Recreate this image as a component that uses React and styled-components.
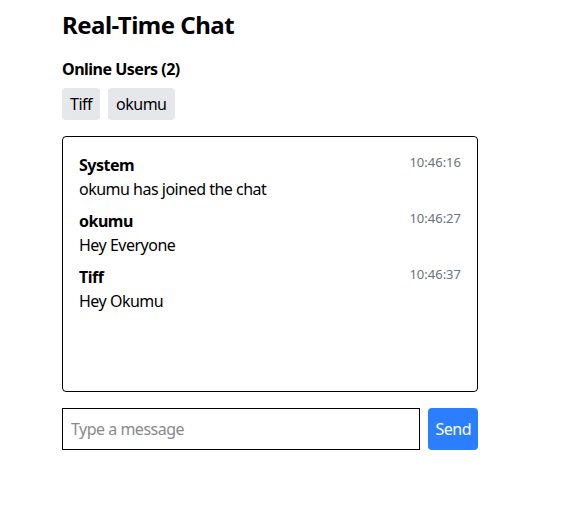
import React, { useState } from 'react';
import styled, { createGlobalStyle } from 'styled-components';

const GlobalStyle = createGlobalStyle`
    body {
        margin: 0;
        background: #ffffff;
        font-family: 'Segoe UI', 'Noto Sans', sans-serif;
        letter-spacing: -0.5px;
        color: #000000;
    }
`

const Page = styled.div`
    width: 416px;
    padding: 9px 0 0 62px;
`

const Title = styled.h1`
    margin: 0;
    font-size: 24px;
    line-height: 32px;
    font-weight: 700;
`

const UsersTitle = styled.h3`
    margin: 16px 0 0;
    font-size: 16px;
    line-height: 24px;
    font-weight: 700;
`

const UserList = styled.div`
    display: flex;
    gap: 8px;
    margin-top: 7px;
`

const UserChip = styled.span`
    background-color: #e5e7eb;
    border-radius: 4px;
    padding: 4px 8px;
    font-size: 16px;
    line-height: 24px;
`

const ChatBox = styled.div`
    box-sizing: border-box;
    height: 256px;
    margin-top: 16px;
    padding: 16px;
    border: 1px solid #000000;
    border-radius: 4px;
    overflow-y: auto;
`

const Message = styled.div`
    margin-bottom: 8px;
`

const MessageHeader = styled.div`
    display: flex;
    justify-content: space-between;
    align-items: flex-start;
`

const Sender = styled.strong`
    font-size: 16px;
    line-height: 24px;
`

const Time = styled.span`
    font-size: 13px;
    line-height: 19px;
    letter-spacing: 0;
    color: #6b7280;
`

const MessageText = styled.div`
    font-size: 16px;
    line-height: 24px;
`

const InputRow = styled.form`
    display: flex;
    gap: 8px;
    margin-top: 16px;
`

const MessageInput = styled.input`
    flex: 1;
    box-sizing: border-box;
    height: 42px;
    padding: 8px;
    border: 1px solid #000000;
    border-radius: 0;
    font-family: inherit;
    font-size: 16px;
    letter-spacing: -0.5px;
    outline: none;

    &::placeholder {
        color: #8a8a8a;
    }
`

const SendButton = styled.button`
    box-sizing: border-box;
    height: 42px;
    padding: 0 7px;
    background-color: #2b7fff;
    color: #ffffff;
    border: none;
    border-radius: 4px;
    font-family: inherit;
    font-size: 16px;
    letter-spacing: -0.5px;
    cursor: pointer;
`

const initialMessages = [
    { id: 1, user: 'System', text: 'okumu has joined the chat', time: '10:46:16' },
    { id: 2, user: 'okumu', text: 'Hey Everyone', time: '10:46:27' },
    { id: 3, user: 'Tiff', text: 'Hey Okumu', time: '10:46:37' },
]

const App = () => {
    const [ messages, setMessages ] = useState(initialMessages);
    const [ draft, setDraft ] = useState('');
    const users = ['Tiff', 'okumu'];

    const handleSend = (e) => {
        e.preventDefault();
        if (!draft.trim()) return;
        const time = new Date().toTimeString().slice(0, 8);
        setMessages([...messages, { id: Date.now(), user: 'Tiff', text: draft, time }]);
        setDraft('');
    }

    return (
        <>
            <GlobalStyle />
            <Page>
                <Title>Real-Time Chat</Title>
                <UsersTitle>Online Users ({users.length})</UsersTitle>
                <UserList>
                    {users.map(u => <UserChip key={u}>{u}</UserChip>)}
                </UserList>
                <ChatBox>
                    {messages.map(m => (
                        <Message key={m.id}>
                            <MessageHeader>
                                <Sender>{m.user}</Sender>
                                <Time>{m.time}</Time>
                            </MessageHeader>
                            <MessageText>{m.text}</MessageText>
                        </Message>
                    ))}
                </ChatBox>
                <InputRow onSubmit={handleSend}>
                    <MessageInput
                        placeholder="Type a message"
                        value={draft}
                        onChange={e => setDraft(e.target.value)}
                    />
                    <SendButton type="submit">Send</SendButton>
                </InputRow>
            </Page>
        </>
    )
}

export default App;
